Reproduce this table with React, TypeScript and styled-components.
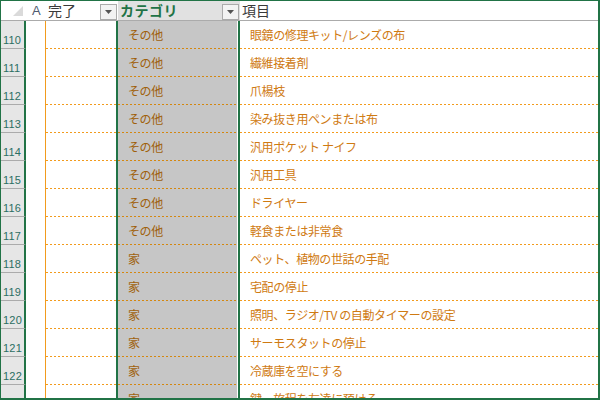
import React from "react";
import styled, { createGlobalStyle } from "styled-components";

const Global = createGlobalStyle`
  html, body { margin: 0; padding: 0; background: #fff; }
  body { font-family: "Noto Sans CJK JP", "Noto Sans", sans-serif; }
`;

const GREEN = "#217346";
const ORANGE = "#f29b1d";
const ORANGE_DARK = "#d4870f";

const Frame = styled.div`
  box-sizing: border-box;
  width: 600px;
  height: 400px;
  border-top: 1px solid ${GREEN};
  border-left: 1px solid ${GREEN};
  border-right: 2px solid ${GREEN};
  border-bottom: 2px solid ${GREEN};
  overflow: hidden;
  display: flex;
  flex-direction: column;
`;

const Grid = styled.div`
  display: grid;
  grid-template-columns: 25px 20px 72px 122px 1fr;
`;

const HeaderRow = styled(Grid)`
  height: 20px;
  box-sizing: border-box;
  border-bottom: 1px solid #ababab;
  flex-shrink: 0;
`;

const HeadCell = styled.div<{ $shade?: boolean }>`
  position: relative;
  display: flex;
  align-items: center;
  background: ${(p) => (p.$shade ? "#e1e1e1" : "#fff")};
  font-size: 14px;
  color: #3a3a3a;
  line-height: 19px;
  white-space: nowrap;
`;

const Corner = styled(HeadCell)`
  justify-content: flex-end;
  padding-right: 3px;
`;

const HeadLabel = styled.span<{ $accent?: boolean }>`
  padding-left: 2px;
  color: ${(p) => (p.$accent ? GREEN : "#3a3a3a")};
  font-weight: ${(p) => (p.$accent ? 700 : 400)};
  letter-spacing: ${(p) => (p.$accent ? "0.5px" : "0")};
`;

const ColLetter = styled.span`
  font-family: "Liberation Sans", Arial, sans-serif;
  font-size: 13px;
  color: #505a70;
  padding-left: 6px;
`;

const FilterButton = styled.div`
  position: absolute;
  right: 1px;
  top: 3px;
  box-sizing: border-box;
  width: 17px;
  height: 16px;
  border: 1px solid #ababab;
  background: #f3f3f3;
  display: flex;
  align-items: center;
  justify-content: center;
`;

const Body = styled.div`
  flex: 1;
  display: flex;
  flex-direction: column;
  overflow: hidden;
`;

const Row = styled(Grid)`
  height: 28px;
  flex-shrink: 0;
`;

const RowHead = styled.div`
  box-sizing: border-box;
  background: #e6e6e6;
  border-right: 2px solid ${GREEN};
  border-bottom: 1px solid #ababab;
  display: flex;
  align-items: flex-end;
  padding: 0 0 2px 2px;
  font-family: "Liberation Sans", Arial, sans-serif;
  font-size: 11px;
  line-height: 11px;
  color: #2b6e63;
  letter-spacing: 0.2px;
`;

const ColACell = styled.div`
  box-sizing: border-box;
  border-right: 1px solid ${ORANGE};
  background: #fff;
`;

const DataCell = styled.div<{ $kind: "done" | "cat" | "item" }>`
  box-sizing: border-box;
  display: flex;
  align-items: center;
  padding-left: 10px;
  padding-bottom: 1px;
  font-size: 12px;
  letter-spacing: -0.4px;
  white-space: nowrap;
  overflow: hidden;
  color: ${(p) => (p.$kind === "cat" ? "#a0610c" : "#cf7a12")};
  background-color: ${(p) => (p.$kind === "cat" ? "#c6c6c6" : "#fff")};
  background-image: linear-gradient(
    to right,
    ${(p) => (p.$kind === "cat" ? ORANGE_DARK : ORANGE)} 50%,
    transparent 50%
  );
  background-size: 4px 1px;
  background-repeat: repeat-x;
  background-position: left bottom;
  border-right: ${(p) => (p.$kind === "item" ? "none" : `2px solid ${GREEN}`)};
  box-shadow: ${(p) => (p.$kind === "cat" ? "inset -1px 0 0 #fff" : "none")};
`;

const rows: [number, string, string][] = [
  [110, "その他", "眼鏡の修理キット/レンズの布"],
  [111, "その他", "繊維接着剤"],
  [112, "その他", "爪楊枝"],
  [113, "その他", "染み抜き用ペンまたは布"],
  [114, "その他", "汎用ポケット ナイフ"],
  [115, "その他", "汎用工具"],
  [116, "その他", "ドライヤー"],
  [117, "その他", "軽食または非常食"],
  [118, "家", "ペット、植物の世話の手配"],
  [119, "家", "宅配の停止"],
  [120, "家", "照明、ラジオ/TV の自動タイマーの設定"],
  [121, "家", "サーモスタットの停止"],
  [122, "家", "冷蔵庫を空にする"],
  [123, "家", "鍵、旅程を友達に預ける"],
];

const Arrow = () => (
  <svg width="7" height="4" viewBox="0 0 7 4">
    <path d="M0 0 H7 L3.5 4 Z" fill="#555" />
  </svg>
);

const CornerMark = () => (
  <svg width="10" height="10" viewBox="0 0 10 10">
    <path d="M10 0 V10 H0 Z" fill="#dadada" />
  </svg>
);

export default function App() {
  return (
    <>
      <Global />
      <Frame>
        <HeaderRow>
          <Corner>
            <CornerMark />
          </Corner>
          <HeadCell>
            <ColLetter>A</ColLetter>
          </HeadCell>
          <HeadCell>
            <HeadLabel>完了</HeadLabel>
            <FilterButton>
              <Arrow />
            </FilterButton>
          </HeadCell>
          <HeadCell $shade>
            <HeadLabel $accent>カテゴリ</HeadLabel>
            <FilterButton>
              <Arrow />
            </FilterButton>
          </HeadCell>
          <HeadCell>
            <HeadLabel>項目</HeadLabel>
          </HeadCell>
        </HeaderRow>
        <Body>
          {rows.map(([n, cat, item]) => (
            <Row key={n}>
              <RowHead>{n}</RowHead>
              <ColACell />
              <DataCell $kind="done" />
              <DataCell $kind="cat">{cat}</DataCell>
              <DataCell $kind="item">{item}</DataCell>
            </Row>
          ))}
        </Body>
      </Frame>
    </>
  );
}
